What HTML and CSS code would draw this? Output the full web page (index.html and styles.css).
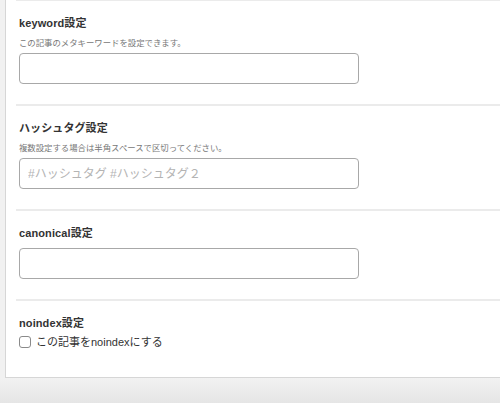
FILE: index.html
```html
<!DOCTYPE html>
<html lang="ja">
<head>
<meta charset="utf-8">
<link rel="stylesheet" href="styles.css">
</head>
<body>
<div class="page">
  <div class="panel">
    <section class="field first">
      <h3 class="field-title">keyword設定</h3>
      <p class="field-desc">この記事のメタキーワードを設定できます。</p>
      <input class="text-input" type="text">
    </section>
    <section class="field">
      <h3 class="field-title">ハッシュタグ設定</h3>
      <p class="field-desc">複数設定する場合は半角スペースで区切ってください。</p>
      <input class="text-input" type="text" placeholder="#ハッシュタグ #ハッシュタグ２">
    </section>
    <section class="field">
      <h3 class="field-title">canonical設定</h3>
      <input class="text-input no-desc" type="text">
    </section>
    <section class="field last">
      <h3 class="field-title">noindex設定</h3>
      <label class="check-row"><span class="check-box"></span><span class="check-label">この記事をnoindexにする</span></label>
    </section>
  </div>
  <div class="footer-band"></div>
</div>
</body>
</html>
```

FILE: styles.css
```css
* { box-sizing: border-box; }
html, body { margin: 0; padding: 0; }
body {
  background: #f1f1f1;
  font-family: "Liberation Sans", "Noto Sans CJK JP", sans-serif;
  color: #333;
  width: 500px;
  height: 403px;
  overflow: hidden;
}
.page {
  display: flex;
  flex-direction: column;
  padding-left: 5px;
  margin-top: -1px;
}
.panel {
  background: #fff;
  border-left: 1px solid #d6d6d6;
  border-bottom: 1px solid #d6d6d6;
  width: 520px;
  height: 379px;
  padding-left: 10px;
}
.field {
  border-top: 2px solid #ebebeb;
  padding: 15px 0 20px 3px;
}
.field-title {
  margin: 0;
  font-size: 11px;
  line-height: 15px;
  font-weight: bold;
  color: #333;
  letter-spacing: 0.1px;
}
.field-desc {
  margin: 6px 0 4px;
  font-size: 8.4px;
  line-height: 12px;
  color: #777;
}
.text-input {
  display: block;
  width: 340px;
  height: 31px;
  border: 1px solid #a8a8a8;
  border-radius: 4px;
  padding: 0 8px;
  font-family: "Liberation Sans", "Noto Sans CJK JP", sans-serif;
  font-size: 12px;
  color: #333;
  background: #fff;
  outline: none;
}
.text-input::placeholder { color: #b4b4b4; }
.text-input.no-desc { margin-top: 7px; }
.check-row {
  display: flex;
  align-items: center;
  gap: 5px;
  margin-top: 4px;
}
.check-box {
  width: 12px;
  height: 12px;
  border: 1px solid #8a8a8a;
  border-radius: 3px;
  background: #fff;
}
.check-label {
  font-size: 11px;
  line-height: 14px;
  color: #333;
}
.footer-band {
  margin-left: -5px;
  height: 30px;
  background: linear-gradient(#f2f2f2, #e3e3e3);
}
```
